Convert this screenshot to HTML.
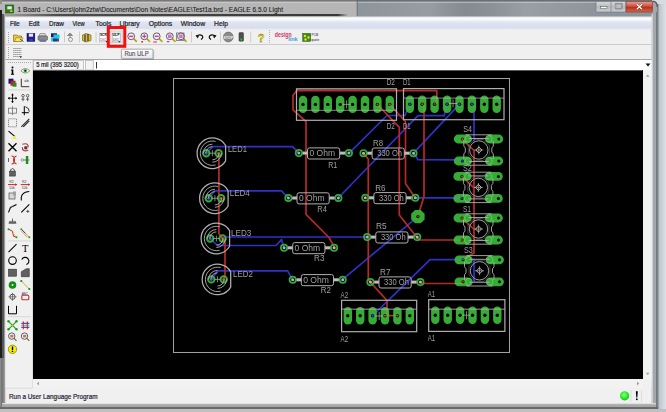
<!DOCTYPE html><html><head><meta charset="utf-8"><style>html,body{margin:0;padding:0;width:666px;height:412px;overflow:hidden;background:#a6aaae}svg{display:block}text{font-family:"Liberation Sans",sans-serif}</style></head><body>
<svg width="666" height="412" viewBox="0 0 666 412">
<defs>
<linearGradient id="tb" x1="0" y1="0" x2="0" y2="1"><stop offset="0" stop-color="#d4d6d8"/><stop offset="0.25" stop-color="#bfc2c5"/><stop offset="1" stop-color="#a9adb1"/></linearGradient>
<linearGradient id="tb2" x1="0" y1="0" x2="1" y2="0"><stop offset="0" stop-color="#000" stop-opacity="0"/><stop offset="0.5" stop-color="#000" stop-opacity="0.12"/><stop offset="1" stop-color="#000" stop-opacity="0.18"/></linearGradient>
<linearGradient id="mb" x1="0" y1="0" x2="0" y2="1"><stop offset="0" stop-color="#fdfdfe"/><stop offset="0.12" stop-color="#fafbfd"/><stop offset="0.42" stop-color="#dfe4f1"/><stop offset="0.85" stop-color="#d9deef"/><stop offset="1" stop-color="#e6e9f3"/></linearGradient>
<linearGradient id="cl" x1="0" y1="0" x2="0" y2="1"><stop offset="0" stop-color="#e8a090"/><stop offset="0.45" stop-color="#cc5440"/><stop offset="0.55" stop-color="#b8301e"/><stop offset="1" stop-color="#d4684c"/></linearGradient>
<linearGradient id="bt" x1="0" y1="0" x2="0" y2="1"><stop offset="0" stop-color="#d8dadc"/><stop offset="0.5" stop-color="#b8bcc0"/><stop offset="1" stop-color="#c8ccd0"/></linearGradient>
<linearGradient id="rf" x1="0" y1="0" x2="1" y2="0"><stop offset="0" stop-color="#50565e"/><stop offset="0.15" stop-color="#7a828c"/><stop offset="0.35" stop-color="#c0c6ce"/><stop offset="1" stop-color="#dde2e8"/></linearGradient>
</defs>
<rect x="0" y="0" width="666" height="412" fill="#a6aaae"/>
<rect x="0" y="0" width="357.5" height="17" fill="#b6b6b6"/>
<rect x="357.5" y="0" width="295" height="17" fill="#8e949c"/>
<defs><linearGradient id="streak" x1="0" y1="0" x2="1" y2="0"><stop offset="0" stop-color="#fff" stop-opacity="0"/><stop offset="0.3" stop-color="#fff" stop-opacity="0.08"/><stop offset="0.45" stop-color="#000" stop-opacity="0.06"/><stop offset="0.7" stop-color="#fff" stop-opacity="0.1"/><stop offset="1" stop-color="#fff" stop-opacity="0"/></linearGradient><linearGradient id="band" x1="0" y1="0" x2="1" y2="0"><stop offset="0" stop-color="#333" stop-opacity="0.15"/><stop offset="0.15" stop-color="#333" stop-opacity="0.8"/><stop offset="0.97" stop-color="#2a2a2a" stop-opacity="0.9"/><stop offset="1" stop-color="#2a2a2a" stop-opacity="0"/></linearGradient></defs>
<rect x="357.5" y="0" width="240" height="17" fill="url(#streak)"/>
<rect x="2" y="0" width="355.5" height="1.6" fill="#787878"/>
<rect x="357.5" y="0" width="295" height="1.6" fill="#6a7078"/>
<rect x="2" y="1.8" width="651" height="0.9" fill="#d4d4d4" opacity="0.8"/>
<rect x="0" y="0" width="2" height="4" fill="#909090"/>
<rect x="356.5" y="0" width="1.5" height="17" fill="#555" opacity="0.5"/>
<rect x="5" y="14" width="343" height="2.6" fill="url(#band)"/>
<rect x="2" y="16.2" width="655" height="1.4" fill="#c8c8c8"/>
<rect x="0" y="10" width="2" height="402" fill="#1e1e1e"/><rect x="0" y="358" width="2" height="54" fill="#8a8a8a"/>
<rect x="2" y="14" width="2" height="395" fill="#565656"/><rect x="1" y="358" width="2.5" height="50" fill="#787878"/><rect x="3.5" y="358" width="1.5" height="49" fill="#a4a4a4"/>
<rect x="4" y="15" width="1.2" height="392" fill="#9a9a9a"/>
<rect x="5.2" y="16" width="0.8" height="390" fill="#c6c6c6"/>
<rect x="656" y="4" width="10" height="408" fill="url(#rf)"/><rect x="652" y="0" width="14" height="4" fill="#d8dce2"/>
<rect x="651.5" y="14" width="1.5" height="393" fill="#d0d0d0"/>
<rect x="653" y="12" width="3.3" height="397" fill="#a4a8ac"/>
<path d="M652 1.6H652.5Q657 1.6 657 7V12H652Z" fill="#a4a8ac"/><path d="M652.5 1.2Q657.3 1.2 657.3 7" fill="none" stroke="#565c64" stroke-width="1.4"/>
<rect x="2" y="403" width="654" height="1.5" fill="#d8d8d8"/>
<rect x="2" y="404.5" width="654" height="2.5" fill="#a8a8a8"/>
<rect x="0" y="407" width="658" height="2" fill="#6a6a6a"/>
<rect x="0" y="409" width="666" height="3" fill="#c0c0c0"/>
<rect x="5.6" y="5" width="8" height="8" fill="#1c8a1c" stroke="#0c4a0c" stroke-width="0.6"/>
<rect x="7.3" y="6.3" width="4.5" height="3" fill="#e8e8e8"/>
<rect x="7" y="10.3" width="2" height="1.6" fill="#d02020"/><rect x="10.3" y="10.3" width="2" height="1.6" fill="#ffd020"/>
<text x="17.6" y="11.9" font-size="7.7" fill="#1a1a1a" stroke="#1a1a1a" stroke-width="0.1" textLength="265.4" lengthAdjust="spacingAndGlyphs">1 Board - C:\Users\john2ztw\Documents\Don Notes\EAGLE\Test1a.brd - EAGLE 6.5.0 Light</text>
<path d="M596 1.5H626V10.5Q626 12 624.5 12H597.5Q596 12 596 10.5Z" fill="url(#bt)" stroke="#707478" stroke-width="0.6"/>
<line x1="611" y1="1.5" x2="611" y2="12" stroke="#707478" stroke-width="0.6"/>
<rect x="600.5" y="6.6" width="6.5" height="2" fill="#f8f8f8" stroke="#505050" stroke-width="0.5"/>
<rect x="615.5" y="3.7" width="6.5" height="5" rx="0.8" fill="none" stroke="#505050" stroke-width="1.2"/><rect x="615.5" y="3.7" width="6.5" height="5" rx="0.8" fill="none" stroke="#f8f8f8" stroke-width="0.5"/>
<path d="M626 1.5H652.5V10.5Q652.5 12 651 12H626Z" fill="url(#cl)" stroke="#803020" stroke-width="0.6"/>
<path d="M636.8 4.3L642 9.3M642 4.3L636.8 9.3" stroke="#5a1a10" stroke-width="2.3" opacity="0.7"/><path d="M636.8 4.3L642 9.3M642 4.3L636.8 9.3" stroke="#ffffff" stroke-width="1.4"/>
<rect x="5.5" y="17.6" width="646" height="385.7" fill="#f0f0f0"/>
<rect x="5.5" y="17.6" width="646" height="11.9" fill="url(#mb)"/>
<line x1="5.5" y1="18" x2="651.5" y2="18" stroke="#ffffff" stroke-width="0.8"/>
<text x="9.9" y="25.7" font-size="7.3" fill="#1e1e1e" stroke="#1e1e1e" stroke-width="0.22" textLength="9.9" lengthAdjust="spacingAndGlyphs">File</text>
<text x="28.8" y="25.7" font-size="7.3" fill="#1e1e1e" stroke="#1e1e1e" stroke-width="0.22" textLength="10.8" lengthAdjust="spacingAndGlyphs">Edit</text>
<text x="49" y="25.7" font-size="7.3" fill="#1e1e1e" stroke="#1e1e1e" stroke-width="0.22" textLength="15" lengthAdjust="spacingAndGlyphs">Draw</text>
<text x="72.4" y="25.7" font-size="7.3" fill="#1e1e1e" stroke="#1e1e1e" stroke-width="0.22" textLength="12.3" lengthAdjust="spacingAndGlyphs">View</text>
<text x="95.5" y="25.7" font-size="7.3" fill="#1e1e1e" stroke="#1e1e1e" stroke-width="0.22" textLength="16" lengthAdjust="spacingAndGlyphs">Tools</text>
<text x="119.4" y="25.7" font-size="7.3" fill="#1e1e1e" stroke="#1e1e1e" stroke-width="0.22" textLength="20.3" lengthAdjust="spacingAndGlyphs">Library</text>
<text x="148.7" y="25.7" font-size="7.3" fill="#1e1e1e" stroke="#1e1e1e" stroke-width="0.22" textLength="23.5" lengthAdjust="spacingAndGlyphs">Options</text>
<text x="180.8" y="25.7" font-size="7.3" fill="#1e1e1e" stroke="#1e1e1e" stroke-width="0.22" textLength="24.3" lengthAdjust="spacingAndGlyphs">Window</text>
<text x="214.1" y="25.7" font-size="7.3" fill="#1e1e1e" stroke="#1e1e1e" stroke-width="0.22" textLength="13.9" lengthAdjust="spacingAndGlyphs">Help</text>
<line x1="5.5" y1="44.5" x2="651.5" y2="44.5" stroke="#c8c8c8" stroke-width="0.9"/>
<line x1="5.5" y1="59.5" x2="651.5" y2="59.5" stroke="#a0a0a0" stroke-width="0.9"/>
<rect x="8" y="32" width="1" height="1" fill="#a0a0a0"/>
<rect x="8" y="34" width="1" height="1" fill="#a0a0a0"/>
<rect x="8" y="36" width="1" height="1" fill="#a0a0a0"/>
<rect x="8" y="38" width="1" height="1" fill="#a0a0a0"/>
<rect x="8" y="40" width="1" height="1" fill="#a0a0a0"/>
<rect x="8" y="42" width="1" height="1" fill="#a0a0a0"/>
<rect x="8" y="47" width="1" height="1" fill="#a0a0a0"/>
<rect x="8" y="49" width="1" height="1" fill="#a0a0a0"/>
<rect x="8" y="51" width="1" height="1" fill="#a0a0a0"/>
<rect x="8" y="53" width="1" height="1" fill="#a0a0a0"/>
<rect x="8" y="55" width="1" height="1" fill="#a0a0a0"/>
<rect x="8" y="57" width="1" height="1" fill="#a0a0a0"/>
<rect x="33" y="60" width="618.5" height="10" fill="#ffffff"/>
<rect x="33.5" y="60.5" width="50" height="9.5" fill="#f4f4f4" stroke="#b8b8b8" stroke-width="0.8"/>
<text x="36.2" y="67" font-size="6.9" fill="#202020" stroke="#202020" stroke-width="0.2" textLength="42.6" lengthAdjust="spacingAndGlyphs">5 mil (395 3200)</text>
<rect x="85.5" y="60.5" width="7.8" height="9.5" fill="#f4f4f4" stroke="#b8b8b8" stroke-width="0.8"/>
<line x1="96.5" y1="62" x2="96.5" y2="68.5" stroke="#000" stroke-width="0.8"/>
<path d="M645.5 63.5H650.5L648 66.5Z" fill="#101010"/>
<rect x="5.5" y="60" width="27" height="328" fill="#f0f0f0"/>
<line x1="32.6" y1="60" x2="32.6" y2="388" stroke="#d8d8d8" stroke-width="0.8"/>
<line x1="5.5" y1="388.2" x2="32.6" y2="388.2" stroke="#d8d8d8" stroke-width="0.8"/>
<rect x="8" y="62" width="1" height="1" fill="#a8a8a8"/>
<rect x="10" y="62" width="1" height="1" fill="#a8a8a8"/>
<rect x="12" y="62" width="1" height="1" fill="#a8a8a8"/>
<rect x="14" y="62" width="1" height="1" fill="#a8a8a8"/>
<rect x="16" y="62" width="1" height="1" fill="#a8a8a8"/>
<rect x="18" y="62" width="1" height="1" fill="#a8a8a8"/>
<rect x="20" y="62" width="1" height="1" fill="#a8a8a8"/>
<rect x="22" y="62" width="1" height="1" fill="#a8a8a8"/>
<rect x="24" y="62" width="1" height="1" fill="#a8a8a8"/>
<rect x="26" y="62" width="1" height="1" fill="#a8a8a8"/>
<rect x="28" y="62" width="1" height="1" fill="#a8a8a8"/>
<rect x="30" y="62" width="1" height="1" fill="#a8a8a8"/>
<line x1="8" y1="89.9" x2="31" y2="89.9" stroke="#d0d0d0" stroke-width="0.8"/>
<line x1="8" y1="240.9" x2="31" y2="240.9" stroke="#d0d0d0" stroke-width="0.8"/>
<line x1="8" y1="316.7" x2="31" y2="316.7" stroke="#d0d0d0" stroke-width="0.8"/>
<rect x="33" y="70" width="610" height="309" fill="#000"/>
<line x1="33" y1="70.5" x2="642.5" y2="70.5" stroke="#707070" stroke-width="0.8"/>
<rect x="643" y="70" width="8.8" height="309" fill="#f2f2f2"/>
<rect x="33" y="379" width="610" height="9" fill="#f2f2f2"/>
<rect x="642.5" y="379" width="9" height="9" fill="#f0f0f0"/>
<path d="M645.8 76.8H649.6L647.7 74.6Z" fill="#a0a0a0"/>
<path d="M645.8 372.8H649.6L647.7 375Z" fill="#a0a0a0"/>
<path d="M39 381.5V385.5L36.8 383.5Z" fill="#a0a0a0"/>
<path d="M637 381.5V385.5L639.2 383.5Z" fill="#a0a0a0"/>
<text x="9" y="398.6" font-size="7.4" fill="#202030" stroke="#202030" stroke-width="0.2" textLength="88.5" lengthAdjust="spacingAndGlyphs">Run a User Language Program</text>
<defs><radialGradient id="gc" cx="0.45" cy="0.4" r="0.65"><stop offset="0" stop-color="#90ff90"/><stop offset="0.55" stop-color="#28f028"/><stop offset="1" stop-color="#10b810"/></radialGradient></defs>
<circle cx="624.6" cy="395.8" r="4.6" fill="url(#gc)"/>
<line x1="631" y1="390" x2="631" y2="402" stroke="#d8d8d8" stroke-width="0.8"/>
<path d="M635.8 391.2H637.8L637.3 397.5H636.3Z" fill="#000"/><rect x="636" y="398.5" width="1.6" height="1.6" fill="#000"/>
<line x1="641.5" y1="390" x2="641.5" y2="402" stroke="#d8d8d8" stroke-width="0.8"/>
<path d="M13.5 35H17L18 36H21.5V41.5H13.5Z" fill="#e8c838" stroke="#806010" stroke-width="0.6"/>
<path d="M14.5 41.5L16 37.8H23L21.5 41.5Z" fill="#f8e870" stroke="#806010" stroke-width="0.5"/>
<path d="M20 39L23.5 41.5" stroke="#202060" stroke-width="0.8"/>
<rect x="27" y="33.5" width="7.8" height="7.8" fill="#1a1a9a" stroke="#000040" stroke-width="0.5"/>
<rect x="28.8" y="33.7" width="4.3" height="3" fill="#e8e8f0"/><rect x="29.2" y="38.6" width="3.6" height="2.6" fill="#404080"/>
<path d="M40 33.5H45L46 36H39Z" fill="#d8d8d8" stroke="#606060" stroke-width="0.5"/>
<rect x="38" y="36" width="9.5" height="4.3" rx="1" fill="#8a8a8a" stroke="#404040" stroke-width="0.5"/>
<rect x="39.5" y="40.3" width="6.5" height="1.5" fill="#6060a0"/>
<rect x="51" y="33.3" width="6" height="4" fill="#1a1a70"/><rect x="53.5" y="34.5" width="6" height="4" fill="#20c8d8"/>
<rect x="51" y="37.8" width="6" height="3.6" fill="#20c8d8"/><rect x="53" y="38.5" width="6" height="3" fill="#1a1a70" opacity="0.8"/>
<line x1="64.5" y1="31.5" x2="64.5" y2="42.5" stroke="#c4c4c4" stroke-width="0.8"/>
<path d="M70 33L72.5 35.5H67.5Z M70 35.5V38" fill="#909090" stroke="#707070" stroke-width="0.7"/>
<circle cx="70.5" cy="39.5" r="2" fill="none" stroke="#808080" stroke-width="0.8"/>
<line x1="79.5" y1="31.5" x2="79.5" y2="42.5" stroke="#c4c4c4" stroke-width="0.8"/>
<path d="M82.5 35L86 33.5L91 35V40.5L86 42L82.5 40.5Z" fill="#e0c020" stroke="#605010" stroke-width="0.6"/>
<path d="M85 34.5V41.5M88 34V41" stroke="#202070" stroke-width="1.1"/>
<line x1="96" y1="31.5" x2="96" y2="42.5" stroke="#c4c4c4" stroke-width="0.8"/>
<rect x="99.5" y="33.3" width="8" height="8.6" fill="#ffffff" stroke="#9a9a9a" stroke-width="0.5"/>
<text x="99.9" y="36.4" font-size="3.4" fill="#101010" font-weight="bold" textLength="7" lengthAdjust="spacingAndGlyphs">SCR</text>
<text x="100.2" y="40.6" font-size="3.4" fill="#505050" textLength="6.2" lengthAdjust="spacingAndGlyphs">DIC</text><path d="M105.5 41.3L107.5 41.3L106.5 42.6Z" fill="#000"/>
<rect x="110.3" y="31" width="12" height="11.8" fill="#e4e4e4" stroke="#c0c0c0" stroke-width="0.5"/>
<rect x="112.2" y="33.3" width="8" height="8.6" fill="#f8f8f8" stroke="#9a9a9a" stroke-width="0.5"/>
<text x="112.6" y="36.4" font-size="3.4" fill="#101010" font-weight="bold" textLength="7" lengthAdjust="spacingAndGlyphs">ULP</text>
<text x="112.9" y="40.6" font-size="3.4" fill="#505050" textLength="6.2" lengthAdjust="spacingAndGlyphs">DIC</text><path d="M118.3 41.3L120.3 41.3L119.3 42.6Z" fill="#000"/>
<rect x="108.3" y="27.5" width="16.5" height="18.8" fill="none" stroke="#ee1111" stroke-width="3"/>
<line x1="133.60000000000002" y1="38.6" x2="136.8" y2="41.8" stroke="#c8c020" stroke-width="2"/>
<line x1="133.60000000000002" y1="38.6" x2="136.8" y2="41.8" stroke="#707010" stroke-width="0.5"/>
<circle cx="131.20000000000002" cy="36.3" r="3.4" fill="#f8eef8" stroke="#606060" stroke-width="1"/>
<rect x="129.20000000000002" y="35.6" width="4" height="1.6" fill="#c040c0"/>
<line x1="146.70000000000002" y1="38.6" x2="149.9" y2="41.8" stroke="#c8c020" stroke-width="2"/>
<line x1="146.70000000000002" y1="38.6" x2="149.9" y2="41.8" stroke="#707010" stroke-width="0.5"/>
<circle cx="144.3" cy="36.3" r="3.4" fill="#f8eef8" stroke="#606060" stroke-width="1"/>
<path d="M142.3 36.3H146.3M144.3 34.3V38.3" stroke="#c040c0" stroke-width="1.3"/><rect x="141.4" y="41" width="1.6" height="1.6" fill="#e02020"/>
<line x1="159.10000000000002" y1="38.6" x2="162.3" y2="41.8" stroke="#c8c020" stroke-width="2"/>
<line x1="159.10000000000002" y1="38.6" x2="162.3" y2="41.8" stroke="#707010" stroke-width="0.5"/>
<circle cx="156.70000000000002" cy="36.3" r="3.4" fill="#f8eef8" stroke="#606060" stroke-width="1"/>
<rect x="154.70000000000002" y="35.6" width="4" height="1.4" fill="#c040c0"/><rect x="153.3" y="41.5" width="3.5" height="1" fill="#e02020"/>
<line x1="172.20000000000002" y1="38.6" x2="175.4" y2="41.8" stroke="#c8c020" stroke-width="2"/>
<line x1="172.20000000000002" y1="38.6" x2="175.4" y2="41.8" stroke="#707010" stroke-width="0.5"/>
<circle cx="169.8" cy="36.3" r="3.4" fill="#f8eef8" stroke="#606060" stroke-width="1"/>
<rect x="168.0" y="34.5" width="3.6" height="3.6" fill="#d070d0"/><rect x="166.9" y="41.2" width="2.5" height="1" fill="#a020a0"/>
<line x1="183.3" y1="38.6" x2="186.5" y2="41.8" stroke="#c8c020" stroke-width="2"/>
<line x1="183.3" y1="38.6" x2="186.5" y2="41.8" stroke="#707010" stroke-width="0.5"/>
<circle cx="180.9" cy="36.3" r="3.4" fill="#f8eef8" stroke="#606060" stroke-width="1"/>
<rect x="176.5" y="33" width="7.5" height="7.5" fill="none" stroke="#606060" stroke-width="0.7"/><rect x="179.1" y="34.5" width="3.6" height="3.6" fill="#d070d0"/>
<line x1="191.5" y1="31.5" x2="191.5" y2="42.5" stroke="#c4c4c4" stroke-width="0.8"/>
<path d="M196.5 36.5Q199.5 33.5 202.5 36Q203.5 38 201 39.5" fill="none" stroke="#101010" stroke-width="1.1"/><path d="M195.5 35L197.8 38.5L199 35.5Z" fill="#101010"/>
<path d="M215.5 36.5Q212.5 33.5 209.5 36Q208.5 38 211 39.5" fill="none" stroke="#101010" stroke-width="1.1"/><path d="M216.5 35L214.2 38.5L213 35.5Z" fill="#101010"/>
<line x1="220.5" y1="31.5" x2="220.5" y2="42.5" stroke="#c4c4c4" stroke-width="0.8"/>
<circle cx="228.3" cy="37" r="4.9" fill="#8a8a8a" stroke="#5a5a5a" stroke-width="0.6"/>
<text x="228.3" y="38.5" font-size="3.8" fill="#f0f0f0" text-anchor="middle" font-weight="bold">STOP</text>
<rect x="239" y="32.6" width="4.5" height="8.6" rx="0.8" fill="#505050" stroke="#303030" stroke-width="0.5"/>
<circle cx="241.2" cy="39.6" r="1.1" fill="#20c020"/>
<line x1="250.7" y1="31.5" x2="250.7" y2="42.5" stroke="#c4c4c4" stroke-width="0.8"/>
<text x="261" y="41.5" font-size="11" font-weight="bold" fill="#fff000" stroke="#303000" stroke-width="0.3" text-anchor="middle">?</text>
<rect x="269" y="30" width="1" height="1" fill="#b0b0b0"/>
<rect x="269" y="32" width="1" height="1" fill="#b0b0b0"/>
<rect x="269" y="34" width="1" height="1" fill="#b0b0b0"/>
<rect x="269" y="36" width="1" height="1" fill="#b0b0b0"/>
<rect x="269" y="38" width="1" height="1" fill="#b0b0b0"/>
<rect x="269" y="40" width="1" height="1" fill="#b0b0b0"/>
<rect x="269" y="42" width="1" height="1" fill="#b0b0b0"/>
<text x="274.8" y="37.3" font-size="6.5" font-weight="bold" fill="#d03868" textLength="17" lengthAdjust="spacingAndGlyphs">design</text>
<text x="288.2" y="41.4" font-size="5.8" font-weight="bold" fill="#40a0d8" textLength="9.5" lengthAdjust="spacingAndGlyphs">link</text>
<rect x="302.7" y="33.4" width="8" height="8" fill="#3a8a20" stroke="#205010" stroke-width="0.5"/>
<circle cx="305" cy="36" r="1.2" fill="#e8e020"/><circle cx="308.5" cy="37.5" r="1.2" fill="#e8e020"/><circle cx="305.5" cy="39.5" r="1.2" fill="#e8e020"/>
<text x="311.5" y="36.3" font-size="3.2" fill="#202020">PCB</text><text x="311.2" y="40.5" font-size="3.2" fill="#202020">quote</text>
<g stroke="#909090" stroke-width="0.6"><line x1="13" y1="48.5" x2="21" y2="48.5"/><line x1="13" y1="50.5" x2="21" y2="50.5"/><line x1="13" y1="52.5" x2="21" y2="52.5"/><line x1="13" y1="54.5" x2="21" y2="54.5"/><line x1="13" y1="56.5" x2="21" y2="56.5"/><line x1="13.5" y1="48" x2="13.5" y2="57" stroke-dasharray="1 1"/><line x1="15.5" y1="48" x2="15.5" y2="57" stroke-dasharray="1 1"/><line x1="17.5" y1="48" x2="17.5" y2="57" stroke-dasharray="1 1"/><line x1="19.5" y1="48" x2="19.5" y2="57" stroke-dasharray="1 1"/><line x1="21" y1="48" x2="21" y2="57" stroke-dasharray="1 1"/></g>
<path d="M19.5 56.5H22L20.8 58Z" fill="#000"/>
<rect x="122.3" y="50.2" width="32" height="9.8" rx="1" fill="#000" opacity="0.12"/>
<defs><linearGradient id="tt" x1="0" y1="0" x2="0" y2="1"><stop offset="0" stop-color="#ffffff"/><stop offset="1" stop-color="#e4e5f0"/></linearGradient></defs>
<rect x="121.4" y="49.2" width="31.6" height="9.6" rx="1" fill="url(#tt)" stroke="#767676" stroke-width="0.6"/>
<text x="124.4" y="56.3" font-size="7.3" fill="#4c4c4c" stroke="#4c4c4c" stroke-width="0.12" textLength="24.3" lengthAdjust="spacingAndGlyphs">Run ULP</text>
<circle cx="12.5" cy="67.6" r="1" fill="#000"/><path d="M11.0 69.6H13.3V73.8H14.1V74.8H10.9V73.8H11.7V70.6H11.0Z" fill="#000"/>
<path d="M20.8 70.8Q25.3 66.3 29.8 70.8Q25.3 75.3 20.8 70.8Z" fill="#fffff0" stroke="#a08820" stroke-width="0.9"/><circle cx="25.3" cy="70.8" r="1.8" fill="#20a0c0"/><circle cx="25.3" cy="70.8" r="0.7" fill="#000"/>
<rect x="8.5" y="78.7" width="5" height="5" fill="#101080"/><rect x="10.5" y="80.7" width="5" height="5" fill="#c02020"/><rect x="12.5" y="82.7" width="4" height="4" fill="#209020"/>
<path d="M21.3 78.7V86.7H29.3" fill="none" stroke="#202020" stroke-width="0.9"/><text x="24.3" y="82.2" font-size="4" fill="#303030">ab</text>
<path d="M8.0 98.2H17.0M12.5 93.7V102.7" stroke="#000" stroke-width="0.9"/><path d="M8.0 98.2l1.5 -1.5v3z M17.0 98.2l-1.5 -1.5v3z M12.5 93.7l-1.5 1.5h3z M12.5 102.7l-1.5 -1.5h3z" fill="#000"/>
<g fill="none" stroke="#404040" stroke-width="0.8"><circle cx="23.0" cy="95.7" r="1.3"/><circle cx="27.6" cy="95.7" r="1.3"/><path d="M23.0 97.2V101.2M27.6 97.2V101.2M21.5 99.2H24.5M26.1 99.2H29.1"/></g>
<g fill="none" stroke="#707070" stroke-width="0.8"><rect x="8.5" y="108.2" width="8" height="5"/><line x1="12.5" y1="106.2" x2="12.5" y2="115.2"/></g>
<path d="M24.3 106.2V115.2M21.8 112.7H28.8" stroke="#000" stroke-width="1"/><path d="M25.3 106.7Q29.3 107.7 29.3 111.7" fill="none" stroke="#000" stroke-width="0.8"/>
<rect x="8.5" y="118.8" width="8" height="8" fill="none" stroke="#505050" stroke-width="0.8" stroke-dasharray="1 1"/>
<path d="M21.3 126.8L29.3 118.8M23.3 126.8L29.3 120.8" stroke="#303030" stroke-width="1.2"/>
<path d="M8.5 131.2L14.5 136.2" stroke="#000" stroke-width="1.1"/><path d="M11.5 138.2L15.5 135.7L16.5 139.2Z" fill="#f0f020"/>
<path d="M8.5 143.3L16.5 151.3M16.5 143.3L8.5 151.3" stroke="#000" stroke-width="1.3"/>
<path d="M22.3 144.3Q28.3 142.3 28.3 147.3M28.3 150.3Q22.3 152.3 22.3 147.3" fill="none" stroke="#c03030" stroke-width="1.2"/><rect x="24.3" y="146.3" width="3" height="3" fill="#404040"/>
<path d="M11.5 156Q14.5 156 14.5 160Q14.5 164 11.5 164M16.5 156Q13.5 157 13.5 160Q13.5 163 16.5 164" fill="none" stroke="#c03030" stroke-width="1.1"/><path d="M8.5 158V162" stroke="#404040" stroke-width="0.8"/>
<path d="M21.3 160H29.3" stroke="#404040" stroke-width="0.8"/><circle cx="22.3" cy="160" r="1.2" fill="#ffffff" stroke="#404040" stroke-width="0.5"/><rect x="25.8" y="156" width="2.5" height="8" fill="#209020"/>
<rect x="9.5" y="171.1" width="6" height="5" fill="#606060" stroke="#303030" stroke-width="0.5"/><path d="M10.7 171.1V169.6Q12.5 167.6 14.3 169.6V171.1" fill="none" stroke="#303030" stroke-width="0.8"/>
<text x="9.2" y="183.1" font-size="3.6" fill="#404040">R2</text><path d="M8.0 184.6H17.0" stroke="#d02020" stroke-width="1"/><path d="M17.0 184.6l-1.8 -1.3v2.6z" fill="#d02020"/><text x="9.0" y="188.6" font-size="3.6" fill="#404040">10k</text>
<text x="22.0" y="183.1" font-size="3.6" fill="#404040">R2</text><path d="M20.8 184.6H29.8" stroke="#d02020" stroke-width="1"/><path d="M29.8 184.6l-1.8 -1.3v2.6z" fill="#d02020"/><text x="21.8" y="188.6" font-size="3.6" fill="#404040">10k</text>
<rect x="9.0" y="193" width="6" height="6" fill="#d8d8d8" stroke="#505050" stroke-width="0.7"/><rect x="13.0" y="191.5" width="3" height="4" fill="#a0a0a0"/>
<path d="M21.3 200.5V197Q22.3 192 29.3 191.5" fill="none" stroke="#000" stroke-width="1.1"/>
<path d="M8.5 212.4L10.5 207.4L16.5 204.4" fill="none" stroke="#000" stroke-width="1.1"/><path d="M10.5 207.4L13.5 205.9" stroke="#808080" stroke-width="0.6"/>
<path d="M21.3 212.4L29.3 204.4" stroke="#000" stroke-width="1.1"/><path d="M26.3 211.4H29.3M27.8 209.9V212.9" stroke="#000" stroke-width="0.6"/>
<path d="M8.5 223.8H16.5L15.5 220.8L13.5 221.8L12.5 217.8L11.5 221.8L9.5 220.8Z" fill="#606060"/>
<path d="M8.5 229.2L12.5 231.2L13.5 236.2L16.5 237.2" fill="none" stroke="#d02020" stroke-width="1"/><path d="M13.0 233.2L16.5 237.2" stroke="#e0c020" stroke-width="0.9"/><circle cx="8.5" cy="229.2" r="1" fill="#20a020"/><circle cx="16.5" cy="237.2" r="1" fill="#20a020"/>
<path d="M21.3 229.2L29.3 237.2M21.3 231.2L27.3 237.2" fill="none" stroke="#d0a020" stroke-width="0.9"/><path d="M21.3 229.2L25.3 233.2" stroke="#2020c0" stroke-width="0.9"/><circle cx="21.3" cy="229.2" r="1" fill="#20a020"/><circle cx="29.3" cy="237.2" r="1" fill="#20a020"/>
<path d="M8.5 252.2L16.5 244.2" stroke="#000" stroke-width="1.1"/>
<text x="25.3" y="252.2" font-size="10.5" fill="#000" text-anchor="middle" style="font-family:'Liberation Serif',serif">T</text>
<circle cx="12.5" cy="260.6" r="3.8" fill="none" stroke="#000" stroke-width="1.1"/>
<path d="M21.8 259.6A3.7 3.7 0 1 1 26.3 264.6" fill="none" stroke="#000" stroke-width="1.1"/>
<rect x="8.5" y="269.2" width="8" height="7" fill="#606060" stroke="#303030" stroke-width="0.6"/>
<path d="M21.3 276.7V271.7L26.3 268.7H29.3V276.7Z" fill="#606060" stroke="#303030" stroke-width="0.6"/>
<circle cx="12.5" cy="285" r="3.8" fill="#109010"/><circle cx="12.5" cy="285" r="1" fill="#f0f0f0"/>
<path d="M21.3 281L29.3 289" stroke="#c8b020" stroke-width="1"/><circle cx="21.3" cy="281" r="1.1" fill="#109010"/><circle cx="29.3" cy="289" r="1.1" fill="#109010"/>
<circle cx="12.5" cy="296.8" r="2.6" fill="none" stroke="#404040" stroke-width="0.9"/><path d="M8.5 296.8H16.5M12.5 292.8V300.8" stroke="#404040" stroke-width="0.6"/>
<rect x="21.8" y="295.3" width="7" height="4.5" rx="1" fill="none" stroke="#c03030" stroke-width="1.1"/><text x="21.8" y="294.8" font-size="3" fill="#303030">ABC</text>
<path d="M8.5 305.8V313.8H16.5V305.8" fill="none" stroke="#000" stroke-width="1"/>
<path d="M8.5 321.3L16.5 329.3M16.5 321.3L8.5 329.3" stroke="#20a020" stroke-width="1.1"/><path d="M11.5 325.3L13.5 325.3" stroke="#e0c020" stroke-width="1"/><circle cx="8.5" cy="321.3" r="1.2" fill="#10a010"/><circle cx="16.5" cy="321.3" r="1.2" fill="#10a010"/><circle cx="8.5" cy="329.3" r="1.2" fill="#10a010"/><circle cx="16.5" cy="329.3" r="1.2" fill="#10a010"/>
<path d="M21.3 323.3H29.3M21.3 327.3H29.3" stroke="#2020d0" stroke-width="1"/><path d="M23.3 321.3V329.3M27.3 321.3V329.3" stroke="#d02020" stroke-width="1"/><path d="M21.3 325.3H29.3" stroke="#20a020" stroke-width="0.7"/>
<circle cx="11.7" cy="336.09999999999997" r="3.2" fill="#f0f0f0" stroke="#505050" stroke-width="0.9"/><path d="M13.8 338.2L16.5 340.9" stroke="#707020" stroke-width="1.2"/><rect x="10.3" y="334.9" width="3" height="2.5" fill="#c03030" opacity="0.7"/>
<circle cx="24.5" cy="336.09999999999997" r="3.2" fill="#f0f0f0" stroke="#505050" stroke-width="0.9"/><path d="M26.6 338.2L29.3 340.9" stroke="#707020" stroke-width="1.2"/><rect x="23.1" y="334.9" width="3" height="2.5" fill="#c03030" opacity="0.7"/>
<circle cx="12.5" cy="349.3" r="4.2" fill="#f4f000" stroke="#606000" stroke-width="0.6"/><rect x="11.8" y="346.5" width="1.4" height="3.5" fill="#000"/><rect x="11.8" y="350.7" width="1.4" height="1.3" fill="#000"/>
<svg x="33" y="70.8" width="610" height="308.2" viewBox="33 70.8 610 308.2" overflow="hidden">
<defs><filter id="nolcd" x="0" y="0" width="1" height="1"><feOffset dx="0" dy="0"/></filter></defs><g font-family="Liberation Sans, sans-serif" filter="url(#nolcd)">
<rect x="173.5" y="78.5" width="336" height="274" fill="none" stroke="#a0a0a0" stroke-width="1.05"/>
<polyline points="206.3,153.2 212.8,146.6 292.6,146.6 298.9,153.1" fill="none" stroke="#3030c8" stroke-width="1.7" stroke-linejoin="round" stroke-linecap="round"/>
<polyline points="208.5,198.3 214.7,190.8 281.4,190.8 288.4,198.0" fill="none" stroke="#3030c8" stroke-width="1.7" stroke-linejoin="round" stroke-linecap="round"/>
<polyline points="210.0,238.5 217.5,245.5 276.0,245.5 281.5,239.5 284.1,247.8" fill="none" stroke="#3030c8" stroke-width="1.7" stroke-linejoin="round" stroke-linecap="round"/>
<polyline points="211.5,279.4 217.5,270.9 287.6,270.9 292.7,279.8" fill="none" stroke="#3030c8" stroke-width="1.7" stroke-linejoin="round" stroke-linecap="round"/>
<polyline points="222.8,238.5 226.0,237.0 367.2,237.0" fill="none" stroke="#3030c8" stroke-width="1.7" stroke-linejoin="round" stroke-linecap="round"/>
<polyline points="349.1,153.1 387.0,115.5 405.0,115.5 409.8,104.2" fill="none" stroke="#3030c8" stroke-width="1.7" stroke-linejoin="round" stroke-linecap="round"/>
<polyline points="338.2,198.0 418.0,115.6 444.2,115.6 447.1,104.2" fill="none" stroke="#3030c8" stroke-width="1.7" stroke-linejoin="round" stroke-linecap="round"/>
<polyline points="459.5,104.2 413.7,152.8" fill="none" stroke="#3030c8" stroke-width="1.7" stroke-linejoin="round" stroke-linecap="round"/>
<polyline points="413.7,152.8 418.0,159.7 462.3,159.9" fill="none" stroke="#3030c8" stroke-width="1.7" stroke-linejoin="round" stroke-linecap="round"/>
<polyline points="415.1,197.8 462.0,197.8" fill="none" stroke="#3030c8" stroke-width="1.7" stroke-linejoin="round" stroke-linecap="round"/>
<polyline points="417.9,216.6 342.1,279.8" fill="none" stroke="#3030c8" stroke-width="1.7" stroke-linejoin="round" stroke-linecap="round"/>
<polyline points="462.6,259.6 430.1,259.7 372.6,315.7" fill="none" stroke="#3030c8" stroke-width="1.7" stroke-linejoin="round" stroke-linecap="round"/>
<polyline points="471.9,104.2 474.0,106.5 474.0,141.0" fill="none" stroke="#3030c8" stroke-width="1.7" stroke-linejoin="round" stroke-linecap="round"/>
<polyline points="474.0,259.0 474.0,282.0" fill="none" stroke="#3030c8" stroke-width="1.7" stroke-linejoin="round" stroke-linecap="round"/>
<polyline points="436.8,103.8 436.8,90.6 296.7,90.4 293.0,95.4 293.0,109.8 306.0,121.5 306.0,214.4 329.0,237.5 334.8,247.8" fill="none" stroke="#b82a2a" stroke-width="1.7" stroke-linejoin="round" stroke-linecap="round"/>
<polyline points="377.4,104.4 399.3,127.4 399.3,215.0 416.6,237.1" fill="none" stroke="#b82a2a" stroke-width="1.7" stroke-linejoin="round" stroke-linecap="round"/>
<polyline points="389.8,104.4 405.5,121.8 405.5,183.5 415.1,197.8" fill="none" stroke="#b82a2a" stroke-width="1.7" stroke-linejoin="round" stroke-linecap="round"/>
<polyline points="422.2,104.2 424.0,106.0 424.0,196.3 417.9,216.6" fill="none" stroke="#b82a2a" stroke-width="1.7" stroke-linejoin="round" stroke-linecap="round"/>
<polyline points="363.5,153.2 368.3,159.0 368.3,279.5 370.4,282.1" fill="none" stroke="#b82a2a" stroke-width="1.7" stroke-linejoin="round" stroke-linecap="round"/>
<polyline points="370.4,282.1 387.0,300.5 387.0,315.6" fill="none" stroke="#b82a2a" stroke-width="1.7" stroke-linejoin="round" stroke-linecap="round"/>
<polyline points="384.8,315.7 397.4,315.7" fill="none" stroke="#b82a2a" stroke-width="1.7" stroke-linejoin="round" stroke-linecap="round"/>
<polyline points="416.6,237.1 419.5,240.0 462.3,240.0" fill="none" stroke="#b82a2a" stroke-width="1.7" stroke-linejoin="round" stroke-linecap="round"/>
<polyline points="420.5,282.1 422.0,283.5 462.5,283.5" fill="none" stroke="#b82a2a" stroke-width="1.7" stroke-linejoin="round" stroke-linecap="round"/>
<polyline points="218.5,153.2 218.9,156.0 218.9,233.8 222.8,238.5 225.0,242.0 225.0,275.0 223.5,279.4" fill="none" stroke="#b82a2a" stroke-width="1.7" stroke-linejoin="round" stroke-linecap="round"/>
<polyline points="474.0,150.5 474.0,253.0 462.6,259.6" fill="none" stroke="#b82a2a" stroke-width="1.7" stroke-linejoin="round" stroke-linecap="round"/>
<polyline points="462.0,139.0 474.0,150.5" fill="none" stroke="#b82a2a" stroke-width="1.7" stroke-linejoin="round" stroke-linecap="round"/>
<polyline points="462.0,176.4 474.0,188.0" fill="none" stroke="#b82a2a" stroke-width="1.7" stroke-linejoin="round" stroke-linecap="round"/>
<polyline points="462.0,218.0 474.0,229.5" fill="none" stroke="#b82a2a" stroke-width="1.7" stroke-linejoin="round" stroke-linecap="round"/>
<rect x="298.8" y="95.7" width="8.4" height="17.4" rx="4.2" fill="#36ac36"/>
<circle cx="303.0" cy="104.4" r="1.7" fill="#000"/>
<rect x="311.2" y="95.7" width="8.4" height="17.4" rx="4.2" fill="#36ac36"/>
<circle cx="315.4" cy="104.4" r="1.7" fill="#000"/>
<rect x="323.6" y="95.7" width="8.4" height="17.4" rx="4.2" fill="#36ac36"/>
<circle cx="327.8" cy="104.4" r="1.7" fill="#000"/>
<rect x="336.0" y="95.7" width="8.4" height="17.4" rx="4.2" fill="#36ac36"/>
<circle cx="340.2" cy="104.4" r="1.7" fill="#000"/>
<rect x="348.4" y="95.7" width="8.4" height="17.4" rx="4.2" fill="#36ac36"/>
<circle cx="352.6" cy="104.4" r="1.7" fill="#000"/>
<rect x="360.8" y="95.7" width="8.4" height="17.4" rx="4.2" fill="#36ac36"/>
<circle cx="365.0" cy="104.4" r="1.7" fill="#000"/>
<rect x="373.2" y="95.7" width="8.4" height="17.4" rx="4.2" fill="#36ac36"/>
<circle cx="377.4" cy="104.4" r="1.7" fill="#000"/>
<circle cx="377.4" cy="104.4" r="1.1" fill="#b82a2a"/>
<rect x="385.6" y="95.7" width="8.4" height="17.4" rx="4.2" fill="#36ac36"/>
<circle cx="389.8" cy="104.4" r="1.7" fill="#000"/>
<circle cx="389.8" cy="104.4" r="1.1" fill="#b82a2a"/>
<rect x="405.6" y="95.5" width="8.4" height="17.4" rx="4.2" fill="#36ac36"/>
<circle cx="409.8" cy="104.2" r="1.7" fill="#000"/>
<circle cx="409.8" cy="104.2" r="1.1" fill="#3030c8"/>
<rect x="418.0" y="95.5" width="8.4" height="17.4" rx="4.2" fill="#36ac36"/>
<circle cx="422.2" cy="104.2" r="1.7" fill="#000"/>
<circle cx="422.2" cy="104.2" r="1.1" fill="#b82a2a"/>
<rect x="430.4" y="95.5" width="8.4" height="17.4" rx="4.2" fill="#36ac36"/>
<circle cx="434.6" cy="104.2" r="1.7" fill="#000"/>
<circle cx="434.6" cy="104.2" r="1.1" fill="#b82a2a"/>
<rect x="442.9" y="95.5" width="8.4" height="17.4" rx="4.2" fill="#36ac36"/>
<circle cx="447.1" cy="104.2" r="1.7" fill="#000"/>
<circle cx="447.1" cy="104.2" r="1.1" fill="#3030c8"/>
<rect x="455.3" y="95.5" width="8.4" height="17.4" rx="4.2" fill="#36ac36"/>
<circle cx="459.5" cy="104.2" r="1.7" fill="#000"/>
<circle cx="459.5" cy="104.2" r="1.1" fill="#3030c8"/>
<rect x="467.7" y="95.5" width="8.4" height="17.4" rx="4.2" fill="#36ac36"/>
<circle cx="471.9" cy="104.2" r="1.7" fill="#000"/>
<circle cx="471.9" cy="104.2" r="1.1" fill="#3030c8"/>
<rect x="480.1" y="95.5" width="8.4" height="17.4" rx="4.2" fill="#36ac36"/>
<circle cx="484.3" cy="104.2" r="1.7" fill="#000"/>
<rect x="492.5" y="95.5" width="8.4" height="17.4" rx="4.2" fill="#36ac36"/>
<circle cx="496.7" cy="104.2" r="1.7" fill="#000"/>
<rect x="343.6" y="307.0" width="8.4" height="17.4" rx="4.2" fill="#36ac36"/>
<circle cx="347.8" cy="315.7" r="1.7" fill="#000"/>
<rect x="356.0" y="307.0" width="8.4" height="17.4" rx="4.2" fill="#36ac36"/>
<circle cx="360.2" cy="315.7" r="1.7" fill="#000"/>
<rect x="368.4" y="307.0" width="8.4" height="17.4" rx="4.2" fill="#36ac36"/>
<circle cx="372.6" cy="315.7" r="1.7" fill="#000"/>
<circle cx="372.6" cy="315.7" r="1.1" fill="#3030c8"/>
<rect x="380.8" y="307.0" width="8.4" height="17.4" rx="4.2" fill="#36ac36"/>
<circle cx="385.0" cy="315.7" r="1.7" fill="#000"/>
<circle cx="385.0" cy="315.7" r="1.1" fill="#b82a2a"/>
<rect x="393.2" y="307.0" width="8.4" height="17.4" rx="4.2" fill="#36ac36"/>
<circle cx="397.4" cy="315.7" r="1.7" fill="#000"/>
<circle cx="397.4" cy="315.7" r="1.1" fill="#b82a2a"/>
<rect x="405.6" y="307.0" width="8.4" height="17.4" rx="4.2" fill="#36ac36"/>
<circle cx="409.8" cy="315.7" r="1.7" fill="#000"/>
<rect x="431.1" y="306.6" width="8.4" height="17.4" rx="4.2" fill="#36ac36"/>
<circle cx="435.3" cy="315.3" r="1.7" fill="#000"/>
<rect x="443.5" y="306.6" width="8.4" height="17.4" rx="4.2" fill="#36ac36"/>
<circle cx="447.7" cy="315.3" r="1.7" fill="#000"/>
<rect x="455.9" y="306.6" width="8.4" height="17.4" rx="4.2" fill="#36ac36"/>
<circle cx="460.1" cy="315.3" r="1.7" fill="#000"/>
<rect x="468.3" y="306.6" width="8.4" height="17.4" rx="4.2" fill="#36ac36"/>
<circle cx="472.5" cy="315.3" r="1.7" fill="#000"/>
<rect x="480.7" y="306.6" width="8.4" height="17.4" rx="4.2" fill="#36ac36"/>
<circle cx="484.9" cy="315.3" r="1.7" fill="#000"/>
<rect x="493.1" y="306.6" width="8.4" height="17.4" rx="4.2" fill="#36ac36"/>
<circle cx="497.3" cy="315.3" r="1.7" fill="#000"/>
<rect x="453.8" y="134.6" width="17.6" height="8.8" rx="4.4" fill="#36ac36"/>
<circle cx="468.3" cy="139.0" r="3.4" fill="none" stroke="#7ad87a" stroke-width="0.9" opacity="0.7"/>
<circle cx="462.3" cy="139.0" r="1.5" fill="#000"/>
<rect x="453.8" y="156.6" width="17.6" height="8.8" rx="4.4" fill="#36ac36"/>
<circle cx="468.3" cy="161.0" r="3.4" fill="none" stroke="#7ad87a" stroke-width="0.9" opacity="0.7"/>
<circle cx="462.3" cy="161.0" r="1.5" fill="#000"/>
<rect x="485.6" y="134.6" width="17.6" height="8.8" rx="4.4" fill="#36ac36"/>
<circle cx="488.8" cy="139.0" r="3.4" fill="none" stroke="#7ad87a" stroke-width="0.9" opacity="0.7"/>
<circle cx="498.8" cy="139.0" r="1.5" fill="#000"/>
<rect x="485.6" y="156.6" width="17.6" height="8.8" rx="4.4" fill="#36ac36"/>
<circle cx="488.8" cy="161.0" r="3.4" fill="none" stroke="#7ad87a" stroke-width="0.9" opacity="0.7"/>
<circle cx="498.8" cy="161.0" r="1.5" fill="#000"/>
<circle cx="462.3" cy="139.0" r="1" fill="#b82a2a"/><circle cx="462.3" cy="161.0" r="1" fill="#3030c8"/>
<rect x="453.4" y="172.0" width="17.6" height="8.8" rx="4.4" fill="#36ac36"/>
<circle cx="467.9" cy="176.4" r="3.4" fill="none" stroke="#7ad87a" stroke-width="0.9" opacity="0.7"/>
<circle cx="461.9" cy="176.4" r="1.5" fill="#000"/>
<rect x="453.4" y="194.0" width="17.6" height="8.8" rx="4.4" fill="#36ac36"/>
<circle cx="467.9" cy="198.4" r="3.4" fill="none" stroke="#7ad87a" stroke-width="0.9" opacity="0.7"/>
<circle cx="461.9" cy="198.4" r="1.5" fill="#000"/>
<rect x="485.2" y="172.0" width="17.6" height="8.8" rx="4.4" fill="#36ac36"/>
<circle cx="488.4" cy="176.4" r="3.4" fill="none" stroke="#7ad87a" stroke-width="0.9" opacity="0.7"/>
<circle cx="498.4" cy="176.4" r="1.5" fill="#000"/>
<rect x="485.2" y="194.0" width="17.6" height="8.8" rx="4.4" fill="#36ac36"/>
<circle cx="488.4" cy="198.4" r="3.4" fill="none" stroke="#7ad87a" stroke-width="0.9" opacity="0.7"/>
<circle cx="498.4" cy="198.4" r="1.5" fill="#000"/>
<circle cx="461.9" cy="176.4" r="1" fill="#b82a2a"/><circle cx="461.9" cy="198.4" r="1" fill="#3030c8"/>
<rect x="453.5" y="213.6" width="17.6" height="8.8" rx="4.4" fill="#36ac36"/>
<circle cx="468.0" cy="218.0" r="3.4" fill="none" stroke="#7ad87a" stroke-width="0.9" opacity="0.7"/>
<circle cx="462.0" cy="218.0" r="1.5" fill="#000"/>
<rect x="453.5" y="235.6" width="17.6" height="8.8" rx="4.4" fill="#36ac36"/>
<circle cx="468.0" cy="240.0" r="3.4" fill="none" stroke="#7ad87a" stroke-width="0.9" opacity="0.7"/>
<circle cx="462.0" cy="240.0" r="1.5" fill="#000"/>
<rect x="485.3" y="213.6" width="17.6" height="8.8" rx="4.4" fill="#36ac36"/>
<circle cx="488.5" cy="218.0" r="3.4" fill="none" stroke="#7ad87a" stroke-width="0.9" opacity="0.7"/>
<circle cx="498.5" cy="218.0" r="1.5" fill="#000"/>
<rect x="485.3" y="235.6" width="17.6" height="8.8" rx="4.4" fill="#36ac36"/>
<circle cx="488.5" cy="240.0" r="3.4" fill="none" stroke="#7ad87a" stroke-width="0.9" opacity="0.7"/>
<circle cx="498.5" cy="240.0" r="1.5" fill="#000"/>
<circle cx="462.0" cy="218.0" r="1" fill="#b82a2a"/><circle cx="462.0" cy="240.0" r="1" fill="#b82a2a"/>
<rect x="454.5" y="255.4" width="17.6" height="8.8" rx="4.4" fill="#36ac36"/>
<circle cx="469.0" cy="259.8" r="3.4" fill="none" stroke="#7ad87a" stroke-width="0.9" opacity="0.7"/>
<circle cx="463.0" cy="259.8" r="1.5" fill="#000"/>
<rect x="454.5" y="277.4" width="17.6" height="8.8" rx="4.4" fill="#36ac36"/>
<circle cx="469.0" cy="281.8" r="3.4" fill="none" stroke="#7ad87a" stroke-width="0.9" opacity="0.7"/>
<circle cx="463.0" cy="281.8" r="1.5" fill="#000"/>
<rect x="486.3" y="255.4" width="17.6" height="8.8" rx="4.4" fill="#36ac36"/>
<circle cx="489.5" cy="259.8" r="3.4" fill="none" stroke="#7ad87a" stroke-width="0.9" opacity="0.7"/>
<circle cx="499.5" cy="259.8" r="1.5" fill="#000"/>
<rect x="486.3" y="277.4" width="17.6" height="8.8" rx="4.4" fill="#36ac36"/>
<circle cx="489.5" cy="281.8" r="3.4" fill="none" stroke="#7ad87a" stroke-width="0.9" opacity="0.7"/>
<circle cx="499.5" cy="281.8" r="1.5" fill="#000"/>
<circle cx="463.0" cy="259.8" r="1" fill="#3030c8"/><circle cx="463.0" cy="281.8" r="1" fill="#b82a2a"/>
<circle cx="298.9" cy="153.1" r="3.2" fill="none" stroke="#36ac36" stroke-width="1.7"/>
<circle cx="298.9" cy="153.1" r="1.5" fill="#b0a8e0"/>
<circle cx="348.9" cy="153.1" r="3.2" fill="none" stroke="#36ac36" stroke-width="1.7"/>
<circle cx="348.9" cy="153.1" r="1.5" fill="#b0a8e0"/>
<circle cx="288.4" cy="198.0" r="3.2" fill="none" stroke="#36ac36" stroke-width="1.7"/>
<circle cx="288.4" cy="198.0" r="1.5" fill="#b0a8e0"/>
<circle cx="338.4" cy="198.0" r="3.2" fill="none" stroke="#36ac36" stroke-width="1.7"/>
<circle cx="338.4" cy="198.0" r="1.5" fill="#b0a8e0"/>
<circle cx="284.1" cy="247.8" r="3.2" fill="none" stroke="#36ac36" stroke-width="1.7"/>
<circle cx="284.1" cy="247.8" r="1.5" fill="#b0a8e0"/>
<circle cx="334.1" cy="247.8" r="3.2" fill="none" stroke="#36ac36" stroke-width="1.7"/>
<circle cx="334.1" cy="247.8" r="1.5" fill="#d8a8c0"/>
<circle cx="292.7" cy="279.8" r="3.2" fill="none" stroke="#36ac36" stroke-width="1.7"/>
<circle cx="292.7" cy="279.8" r="1.5" fill="#b0a8e0"/>
<circle cx="342.7" cy="279.8" r="3.2" fill="none" stroke="#36ac36" stroke-width="1.7"/>
<circle cx="342.7" cy="279.8" r="1.5" fill="#b0a8e0"/>
<circle cx="363.5" cy="153.2" r="3.2" fill="none" stroke="#36ac36" stroke-width="1.7"/>
<circle cx="363.5" cy="153.2" r="1.5" fill="#d8a8c0"/>
<circle cx="413.5" cy="153.2" r="3.2" fill="none" stroke="#36ac36" stroke-width="1.7"/>
<circle cx="413.5" cy="153.2" r="1.5" fill="#b0a8e0"/>
<circle cx="365.3" cy="197.8" r="3.2" fill="none" stroke="#36ac36" stroke-width="1.7"/>
<circle cx="365.3" cy="197.8" r="1.5" fill="#d8a8c0"/>
<circle cx="415.3" cy="197.8" r="3.2" fill="none" stroke="#36ac36" stroke-width="1.7"/>
<circle cx="415.3" cy="197.8" r="1.5" fill="#b0a8e0"/>
<circle cx="367.2" cy="237.1" r="3.2" fill="none" stroke="#36ac36" stroke-width="1.7"/>
<circle cx="367.2" cy="237.1" r="1.5" fill="#b0a8e0"/>
<circle cx="417.2" cy="237.1" r="3.2" fill="none" stroke="#36ac36" stroke-width="1.7"/>
<circle cx="417.2" cy="237.1" r="1.5" fill="#d8a8c0"/>
<circle cx="370.4" cy="282.1" r="3.2" fill="none" stroke="#36ac36" stroke-width="1.7"/>
<circle cx="370.4" cy="282.1" r="1.5" fill="#d8a8c0"/>
<circle cx="420.4" cy="282.1" r="3.2" fill="none" stroke="#36ac36" stroke-width="1.7"/>
<circle cx="420.4" cy="282.1" r="1.5" fill="#d8a8c0"/>
<circle cx="206.2" cy="153.2" r="3.2" fill="none" stroke="#36ac36" stroke-width="2.0"/>
<circle cx="206.2" cy="153.2" r="1.5" fill="#4848d0"/>
<circle cx="218.6" cy="153.2" r="3.2" fill="none" stroke="#36ac36" stroke-width="2.0"/>
<circle cx="218.6" cy="153.2" r="1.5" fill="#c04848"/>
<circle cx="208.7" cy="198.3" r="3.2" fill="none" stroke="#36ac36" stroke-width="2.0"/>
<circle cx="208.7" cy="198.3" r="1.5" fill="#4848d0"/>
<circle cx="221.1" cy="198.3" r="3.2" fill="none" stroke="#36ac36" stroke-width="2.0"/>
<circle cx="221.1" cy="198.3" r="1.5" fill="#c04848"/>
<circle cx="210.2" cy="238.5" r="3.2" fill="none" stroke="#36ac36" stroke-width="2.0"/>
<circle cx="210.2" cy="238.5" r="1.5" fill="#4848d0"/>
<circle cx="222.6" cy="238.5" r="3.2" fill="none" stroke="#36ac36" stroke-width="2.0"/>
<circle cx="222.6" cy="238.5" r="1.5" fill="#c04848"/>
<circle cx="211.3" cy="279.4" r="3.2" fill="none" stroke="#36ac36" stroke-width="2.0"/>
<circle cx="211.3" cy="279.4" r="1.5" fill="#4848d0"/>
<circle cx="223.7" cy="279.4" r="3.2" fill="none" stroke="#36ac36" stroke-width="2.0"/>
<circle cx="223.7" cy="279.4" r="1.5" fill="#c04848"/>
<polygon points="424.6,219.4 420.7,223.3 415.1,223.3 411.2,219.4 411.2,213.8 415.1,209.9 420.7,209.9 424.6,213.8" fill="#36ac36"/>
<circle cx="417.9" cy="216.6" r="1.6" fill="#000"/>
<circle cx="417.9" cy="216.6" r="1.0" fill="#b82a2a"/>
<clipPath id="padclip"><rect x="298.8" y="95.7" width="8.4" height="17.4" rx="4.2" fill="#36ac36"/><rect x="311.2" y="95.7" width="8.4" height="17.4" rx="4.2" fill="#36ac36"/><rect x="323.6" y="95.7" width="8.4" height="17.4" rx="4.2" fill="#36ac36"/><rect x="336.0" y="95.7" width="8.4" height="17.4" rx="4.2" fill="#36ac36"/><rect x="348.4" y="95.7" width="8.4" height="17.4" rx="4.2" fill="#36ac36"/><rect x="360.8" y="95.7" width="8.4" height="17.4" rx="4.2" fill="#36ac36"/><rect x="373.2" y="95.7" width="8.4" height="17.4" rx="4.2" fill="#36ac36"/><rect x="385.6" y="95.7" width="8.4" height="17.4" rx="4.2" fill="#36ac36"/><rect x="405.6" y="95.5" width="8.4" height="17.4" rx="4.2" fill="#36ac36"/><rect x="418.0" y="95.5" width="8.4" height="17.4" rx="4.2" fill="#36ac36"/><rect x="430.4" y="95.5" width="8.4" height="17.4" rx="4.2" fill="#36ac36"/><rect x="442.9" y="95.5" width="8.4" height="17.4" rx="4.2" fill="#36ac36"/><rect x="455.3" y="95.5" width="8.4" height="17.4" rx="4.2" fill="#36ac36"/><rect x="467.7" y="95.5" width="8.4" height="17.4" rx="4.2" fill="#36ac36"/><rect x="480.1" y="95.5" width="8.4" height="17.4" rx="4.2" fill="#36ac36"/><rect x="492.5" y="95.5" width="8.4" height="17.4" rx="4.2" fill="#36ac36"/><rect x="343.6" y="307.0" width="8.4" height="17.4" rx="4.2" fill="#36ac36"/><rect x="356.0" y="307.0" width="8.4" height="17.4" rx="4.2" fill="#36ac36"/><rect x="368.4" y="307.0" width="8.4" height="17.4" rx="4.2" fill="#36ac36"/><rect x="380.8" y="307.0" width="8.4" height="17.4" rx="4.2" fill="#36ac36"/><rect x="393.2" y="307.0" width="8.4" height="17.4" rx="4.2" fill="#36ac36"/><rect x="405.6" y="307.0" width="8.4" height="17.4" rx="4.2" fill="#36ac36"/><rect x="431.1" y="306.6" width="8.4" height="17.4" rx="4.2" fill="#36ac36"/><rect x="443.5" y="306.6" width="8.4" height="17.4" rx="4.2" fill="#36ac36"/><rect x="455.9" y="306.6" width="8.4" height="17.4" rx="4.2" fill="#36ac36"/><rect x="468.3" y="306.6" width="8.4" height="17.4" rx="4.2" fill="#36ac36"/><rect x="480.7" y="306.6" width="8.4" height="17.4" rx="4.2" fill="#36ac36"/><rect x="493.1" y="306.6" width="8.4" height="17.4" rx="4.2" fill="#36ac36"/><rect x="453.8" y="134.6" width="17.6" height="8.8" rx="4.4" fill="#36ac36"/><rect x="453.8" y="156.6" width="17.6" height="8.8" rx="4.4" fill="#36ac36"/><rect x="485.6" y="134.6" width="17.6" height="8.8" rx="4.4" fill="#36ac36"/><rect x="485.6" y="156.6" width="17.6" height="8.8" rx="4.4" fill="#36ac36"/><rect x="453.4" y="172.0" width="17.6" height="8.8" rx="4.4" fill="#36ac36"/><rect x="453.4" y="194.0" width="17.6" height="8.8" rx="4.4" fill="#36ac36"/><rect x="485.2" y="172.0" width="17.6" height="8.8" rx="4.4" fill="#36ac36"/><rect x="485.2" y="194.0" width="17.6" height="8.8" rx="4.4" fill="#36ac36"/><rect x="453.5" y="213.6" width="17.6" height="8.8" rx="4.4" fill="#36ac36"/><rect x="453.5" y="235.6" width="17.6" height="8.8" rx="4.4" fill="#36ac36"/><rect x="485.3" y="213.6" width="17.6" height="8.8" rx="4.4" fill="#36ac36"/><rect x="485.3" y="235.6" width="17.6" height="8.8" rx="4.4" fill="#36ac36"/><rect x="454.5" y="255.4" width="17.6" height="8.8" rx="4.4" fill="#36ac36"/><rect x="454.5" y="277.4" width="17.6" height="8.8" rx="4.4" fill="#36ac36"/><rect x="486.3" y="255.4" width="17.6" height="8.8" rx="4.4" fill="#36ac36"/><rect x="486.3" y="277.4" width="17.6" height="8.8" rx="4.4" fill="#36ac36"/></clipPath><g opacity="0.25" clip-path="url(#padclip)">
<polyline points="206.3,153.2 212.8,146.6 292.6,146.6 298.9,153.1" fill="none" stroke="#8080ff" stroke-width="1.2" stroke-linejoin="round" stroke-linecap="round"/>
<polyline points="208.5,198.3 214.7,190.8 281.4,190.8 288.4,198.0" fill="none" stroke="#8080ff" stroke-width="1.2" stroke-linejoin="round" stroke-linecap="round"/>
<polyline points="210.0,238.5 217.5,245.5 276.0,245.5 281.5,239.5 284.1,247.8" fill="none" stroke="#8080ff" stroke-width="1.2" stroke-linejoin="round" stroke-linecap="round"/>
<polyline points="211.5,279.4 217.5,270.9 287.6,270.9 292.7,279.8" fill="none" stroke="#8080ff" stroke-width="1.2" stroke-linejoin="round" stroke-linecap="round"/>
<polyline points="222.8,238.5 226.0,237.0 367.2,237.0" fill="none" stroke="#8080ff" stroke-width="1.2" stroke-linejoin="round" stroke-linecap="round"/>
<polyline points="349.1,153.1 387.0,115.5 405.0,115.5 409.8,104.2" fill="none" stroke="#8080ff" stroke-width="1.2" stroke-linejoin="round" stroke-linecap="round"/>
<polyline points="338.2,198.0 418.0,115.6 444.2,115.6 447.1,104.2" fill="none" stroke="#8080ff" stroke-width="1.2" stroke-linejoin="round" stroke-linecap="round"/>
<polyline points="459.5,104.2 413.7,152.8" fill="none" stroke="#8080ff" stroke-width="1.2" stroke-linejoin="round" stroke-linecap="round"/>
<polyline points="413.7,152.8 418.0,159.7 462.3,159.9" fill="none" stroke="#8080ff" stroke-width="1.2" stroke-linejoin="round" stroke-linecap="round"/>
<polyline points="415.1,197.8 462.0,197.8" fill="none" stroke="#8080ff" stroke-width="1.2" stroke-linejoin="round" stroke-linecap="round"/>
<polyline points="417.9,216.6 342.1,279.8" fill="none" stroke="#8080ff" stroke-width="1.2" stroke-linejoin="round" stroke-linecap="round"/>
<polyline points="462.6,259.6 430.1,259.7 372.6,315.7" fill="none" stroke="#8080ff" stroke-width="1.2" stroke-linejoin="round" stroke-linecap="round"/>
<polyline points="471.9,104.2 474.0,106.5 474.0,141.0" fill="none" stroke="#8080ff" stroke-width="1.2" stroke-linejoin="round" stroke-linecap="round"/>
<polyline points="474.0,259.0 474.0,282.0" fill="none" stroke="#8080ff" stroke-width="1.2" stroke-linejoin="round" stroke-linecap="round"/>
<polyline points="436.8,103.8 436.8,90.6 296.7,90.4 293.0,95.4 293.0,109.8 306.0,121.5 306.0,214.4 329.0,237.5 334.8,247.8" fill="none" stroke="#ffb080" stroke-width="1.2" stroke-linejoin="round" stroke-linecap="round"/>
<polyline points="377.4,104.4 399.3,127.4 399.3,215.0 416.6,237.1" fill="none" stroke="#ffb080" stroke-width="1.2" stroke-linejoin="round" stroke-linecap="round"/>
<polyline points="389.8,104.4 405.5,121.8 405.5,183.5 415.1,197.8" fill="none" stroke="#ffb080" stroke-width="1.2" stroke-linejoin="round" stroke-linecap="round"/>
<polyline points="422.2,104.2 424.0,106.0 424.0,196.3 417.9,216.6" fill="none" stroke="#ffb080" stroke-width="1.2" stroke-linejoin="round" stroke-linecap="round"/>
<polyline points="363.5,153.2 368.3,159.0 368.3,279.5 370.4,282.1" fill="none" stroke="#ffb080" stroke-width="1.2" stroke-linejoin="round" stroke-linecap="round"/>
<polyline points="370.4,282.1 387.0,300.5 387.0,315.6" fill="none" stroke="#ffb080" stroke-width="1.2" stroke-linejoin="round" stroke-linecap="round"/>
<polyline points="384.8,315.7 397.4,315.7" fill="none" stroke="#ffb080" stroke-width="1.2" stroke-linejoin="round" stroke-linecap="round"/>
<polyline points="416.6,237.1 419.5,240.0 462.3,240.0" fill="none" stroke="#ffb080" stroke-width="1.2" stroke-linejoin="round" stroke-linecap="round"/>
<polyline points="420.5,282.1 422.0,283.5 462.5,283.5" fill="none" stroke="#ffb080" stroke-width="1.2" stroke-linejoin="round" stroke-linecap="round"/>
<polyline points="218.5,153.2 218.9,156.0 218.9,233.8 222.8,238.5 225.0,242.0 225.0,275.0 223.5,279.4" fill="none" stroke="#ffb080" stroke-width="1.2" stroke-linejoin="round" stroke-linecap="round"/>
<polyline points="474.0,150.5 474.0,253.0 462.6,259.6" fill="none" stroke="#ffb080" stroke-width="1.2" stroke-linejoin="round" stroke-linecap="round"/>
<polyline points="462.0,139.0 474.0,150.5" fill="none" stroke="#ffb080" stroke-width="1.2" stroke-linejoin="round" stroke-linecap="round"/>
<polyline points="462.0,176.4 474.0,188.0" fill="none" stroke="#ffb080" stroke-width="1.2" stroke-linejoin="round" stroke-linecap="round"/>
<polyline points="462.0,218.0 474.0,229.5" fill="none" stroke="#ffb080" stroke-width="1.2" stroke-linejoin="round" stroke-linecap="round"/>
</g>
<rect x="296.5" y="88.8" width="100.0" height="31.5" fill="none" stroke="#b0b0b0" stroke-width="1.2"/>
<line x1="296.5" y1="110.4" x2="396.5" y2="110.4" stroke="#b0b0b0" stroke-width="1.4" opacity="0.6"/>
<rect x="403.5" y="88.6" width="100.5" height="31.1" fill="none" stroke="#b0b0b0" stroke-width="1.2"/>
<line x1="403.5" y1="98.1" x2="504.0" y2="98.1" stroke="#b0b0b0" stroke-width="1.4" opacity="0.6"/>
<rect x="341.6" y="300.3" width="75.1" height="31.4" fill="none" stroke="#b0b0b0" stroke-width="1.2"/>
<line x1="341.6" y1="309.3" x2="416.7" y2="309.3" stroke="#b0b0b0" stroke-width="1.4" opacity="0.6"/>
<rect x="428.7" y="299.7" width="76.2" height="31.7" fill="none" stroke="#b0b0b0" stroke-width="1.2"/>
<line x1="428.7" y1="309.2" x2="504.9" y2="309.2" stroke="#b0b0b0" stroke-width="1.4" opacity="0.6"/>
<path d="M342.6 104.4H350.6M346.6 100.4V108.4" stroke="#c8c8c8" stroke-width="0.8" opacity="0.8"/>
<path d="M449.0 103.5H457.0M453.0 99.5V107.5" stroke="#c8c8c8" stroke-width="0.8" opacity="0.8"/>
<path d="M375.2 316.0H383.2M379.2 312.0V320.0" stroke="#c8c8c8" stroke-width="0.8" opacity="0.8"/>
<path d="M462.5 315.2H470.5M466.5 311.2V319.2" stroke="#c8c8c8" stroke-width="0.8" opacity="0.8"/>
<text x="386.7" y="85.2" font-size="9.2" fill="#a0a0a0" text-anchor="start" textLength="8.1" lengthAdjust="spacingAndGlyphs">D2</text>
<text x="386.8" y="128.9" font-size="9.2" fill="#a0a0a0" text-anchor="start" textLength="8.1" lengthAdjust="spacingAndGlyphs">D2</text>
<text x="403.0" y="85.3" font-size="9.2" fill="#a0a0a0" text-anchor="start" textLength="7.5" lengthAdjust="spacingAndGlyphs">D1</text>
<text x="403.0" y="128.9" font-size="9.2" fill="#a0a0a0" text-anchor="start" textLength="7.5" lengthAdjust="spacingAndGlyphs">D1</text>
<text x="340.6" y="297.5" font-size="9.2" fill="#a0a0a0" text-anchor="start" textLength="7.5" lengthAdjust="spacingAndGlyphs">A2</text>
<text x="340.6" y="341.6" font-size="9.2" fill="#a0a0a0" text-anchor="start" textLength="7.5" lengthAdjust="spacingAndGlyphs">A2</text>
<text x="427.8" y="297.2" font-size="9.2" fill="#a0a0a0" text-anchor="start" textLength="7.3" lengthAdjust="spacingAndGlyphs">A1</text>
<text x="427.8" y="340.7" font-size="9.2" fill="#a0a0a0" text-anchor="start" textLength="7.3" lengthAdjust="spacingAndGlyphs">A1</text>
<path d="M225.6 145.5A15.3 15.3 0 1 0 225.6 160.9Z" fill="none" stroke="#b0b0b0" stroke-width="1.25"/>
<path d="M215.6 141.4A12.2 12.2 0 1 0 215.6 165.0" fill="none" stroke="#b0b0b0" stroke-width="0.9"/>
<path d="M203.4 153.2A9.0 9.0 0 0 1 212.4 144.2M221.4 153.2A9.0 9.0 0 0 1 212.4 162.2" fill="none" stroke="#b0b0b0" stroke-width="0.9"/>
<path d="M205.8 153.2A6.6 6.6 0 0 1 212.4 146.6M219.0 153.2A6.6 6.6 0 0 1 212.4 159.8" fill="none" stroke="#b0b0b0" stroke-width="0.9"/>
<path d="M209.4 153.2H215.4M212.4 150.2V156.2" stroke="#c8c8c8" stroke-width="0.8" opacity="0.8"/>
<text x="227.9" y="151.7" font-size="9.2" fill="#a0a0a0" text-anchor="start" textLength="19" lengthAdjust="spacingAndGlyphs">LED1</text>
<path d="M228.1 190.6A15.3 15.3 0 1 0 228.1 206.0Z" fill="none" stroke="#b0b0b0" stroke-width="1.25"/>
<path d="M218.1 186.5A12.2 12.2 0 1 0 218.1 210.1" fill="none" stroke="#b0b0b0" stroke-width="0.9"/>
<path d="M205.9 198.3A9.0 9.0 0 0 1 214.9 189.3M223.9 198.3A9.0 9.0 0 0 1 214.9 207.3" fill="none" stroke="#b0b0b0" stroke-width="0.9"/>
<path d="M208.3 198.3A6.6 6.6 0 0 1 214.9 191.7M221.5 198.3A6.6 6.6 0 0 1 214.9 204.9" fill="none" stroke="#b0b0b0" stroke-width="0.9"/>
<path d="M211.9 198.3H217.9M214.9 195.3V201.3" stroke="#c8c8c8" stroke-width="0.8" opacity="0.8"/>
<text x="229.7" y="195.5" font-size="9.2" fill="#a0a0a0" text-anchor="start" textLength="20.1" lengthAdjust="spacingAndGlyphs">LED4</text>
<path d="M229.6 230.8A15.3 15.3 0 1 0 229.6 246.2Z" fill="none" stroke="#b0b0b0" stroke-width="1.25"/>
<path d="M219.6 226.7A12.2 12.2 0 1 0 219.6 250.3" fill="none" stroke="#b0b0b0" stroke-width="0.9"/>
<path d="M207.4 238.5A9.0 9.0 0 0 1 216.4 229.5M225.4 238.5A9.0 9.0 0 0 1 216.4 247.5" fill="none" stroke="#b0b0b0" stroke-width="0.9"/>
<path d="M209.8 238.5A6.6 6.6 0 0 1 216.4 231.9M223.0 238.5A6.6 6.6 0 0 1 216.4 245.1" fill="none" stroke="#b0b0b0" stroke-width="0.9"/>
<path d="M213.4 238.5H219.4M216.4 235.5V241.5" stroke="#c8c8c8" stroke-width="0.8" opacity="0.8"/>
<text x="231.0" y="236.0" font-size="9.2" fill="#a0a0a0" text-anchor="start" textLength="20.3" lengthAdjust="spacingAndGlyphs">LED3</text>
<path d="M230.7 271.7A15.3 15.3 0 1 0 230.7 287.1Z" fill="none" stroke="#b0b0b0" stroke-width="1.25"/>
<path d="M220.7 267.6A12.2 12.2 0 1 0 220.7 291.2" fill="none" stroke="#b0b0b0" stroke-width="0.9"/>
<path d="M208.5 279.4A9.0 9.0 0 0 1 217.5 270.4M226.5 279.4A9.0 9.0 0 0 1 217.5 288.4" fill="none" stroke="#b0b0b0" stroke-width="0.9"/>
<path d="M210.9 279.4A6.6 6.6 0 0 1 217.5 272.8M224.1 279.4A6.6 6.6 0 0 1 217.5 286.0" fill="none" stroke="#b0b0b0" stroke-width="0.9"/>
<path d="M214.5 279.4H220.5M217.5 276.4V282.4" stroke="#c8c8c8" stroke-width="0.8" opacity="0.8"/>
<text x="233.0" y="277.0" font-size="9.2" fill="#a0a0a0" text-anchor="start" textLength="19.8" lengthAdjust="spacingAndGlyphs">LED2</text>
<path d="M465.8 134.8H491.8M465.8 165.2H491.8M463.8 141.0V146.0L465.3 148.0V152.0L463.8 154.0V159.0M493.3 141.0V146.0L491.8 148.0V152.0L493.3 154.0V159.0M468.8 138.5H488.8M468.8 161.5H488.8" fill="none" stroke="#b0b0b0" stroke-width="0.9"/>
<circle cx="478.8" cy="150.0" r="9.2" fill="none" stroke="#b0b0b0" stroke-width="0.9"/>
<polygon points="489.3,154.4 483.2,160.5 474.4,160.5 468.3,154.4 468.3,145.6 474.4,139.5 483.2,139.5 489.3,145.6" fill="none" stroke="#b0b0b0" stroke-width="0.7" opacity="0.5"/>
<path d="M475.8 150.0L478.8 147.0L481.8 150.0L478.8 153.0Z" fill="none" stroke="#d0d0d0" stroke-width="0.9"/>
<path d="M474.3 150.0H483.3M478.8 145.5V154.5" stroke="#c8c8c8" stroke-width="0.8" opacity="0.8"/>
<text x="463.3" y="131.8" font-size="9.2" fill="#a0a0a0" text-anchor="start" textLength="8.8" lengthAdjust="spacingAndGlyphs">S4</text>
<path d="M465.4 172.2H491.4M465.4 202.6H491.4M463.4 178.4V183.4L464.9 185.4V189.4L463.4 191.4V196.4M492.9 178.4V183.4L491.4 185.4V189.4L492.9 191.4V196.4M468.4 175.9H488.4M468.4 198.9H488.4" fill="none" stroke="#b0b0b0" stroke-width="0.9"/>
<circle cx="478.4" cy="187.4" r="9.2" fill="none" stroke="#b0b0b0" stroke-width="0.9"/>
<polygon points="488.9,191.8 482.8,197.9 474.0,197.9 467.9,191.8 467.9,183.0 474.0,176.9 482.8,176.9 488.9,183.0" fill="none" stroke="#b0b0b0" stroke-width="0.7" opacity="0.5"/>
<path d="M475.4 187.4L478.4 184.4L481.4 187.4L478.4 190.4Z" fill="none" stroke="#d0d0d0" stroke-width="0.9"/>
<path d="M473.9 187.4H482.9M478.4 182.9V191.9" stroke="#c8c8c8" stroke-width="0.8" opacity="0.8"/>
<text x="463.0" y="170.9" font-size="9.2" fill="#a0a0a0" text-anchor="start" textLength="8.8" lengthAdjust="spacingAndGlyphs">S2</text>
<path d="M465.5 213.8H491.5M465.5 244.2H491.5M463.5 220.0V225.0L465.0 227.0V231.0L463.5 233.0V238.0M493.0 220.0V225.0L491.5 227.0V231.0L493.0 233.0V238.0M468.5 217.5H488.5M468.5 240.5H488.5" fill="none" stroke="#b0b0b0" stroke-width="0.9"/>
<circle cx="478.5" cy="229.0" r="9.2" fill="none" stroke="#b0b0b0" stroke-width="0.9"/>
<polygon points="489.0,233.4 482.9,239.5 474.1,239.5 468.0,233.4 468.0,224.6 474.1,218.5 482.9,218.5 489.0,224.6" fill="none" stroke="#b0b0b0" stroke-width="0.7" opacity="0.5"/>
<path d="M475.5 229.0L478.5 226.0L481.5 229.0L478.5 232.0Z" fill="none" stroke="#d0d0d0" stroke-width="0.9"/>
<path d="M474.0 229.0H483.0M478.5 224.5V233.5" stroke="#c8c8c8" stroke-width="0.8" opacity="0.8"/>
<text x="463.0" y="211.9" font-size="9.2" fill="#a0a0a0" text-anchor="start" textLength="8.0" lengthAdjust="spacingAndGlyphs">S1</text>
<path d="M466.5 255.6H492.5M466.5 286.0H492.5M464.5 261.8V266.8L466.0 268.8V272.8L464.5 274.8V279.8M494.0 261.8V266.8L492.5 268.8V272.8L494.0 274.8V279.8M469.5 259.3H489.5M469.5 282.3H489.5" fill="none" stroke="#b0b0b0" stroke-width="0.9"/>
<circle cx="479.5" cy="270.8" r="9.2" fill="none" stroke="#b0b0b0" stroke-width="0.9"/>
<polygon points="490.0,275.2 483.9,281.3 475.1,281.3 469.0,275.2 469.0,266.4 475.1,260.3 483.9,260.3 490.0,266.4" fill="none" stroke="#b0b0b0" stroke-width="0.7" opacity="0.5"/>
<path d="M476.5 270.8L479.5 267.8L482.5 270.8L479.5 273.8Z" fill="none" stroke="#d0d0d0" stroke-width="0.9"/>
<path d="M475.0 270.8H484.0M479.5 266.3V275.3" stroke="#c8c8c8" stroke-width="0.8" opacity="0.8"/>
<text x="463.9" y="253.4" font-size="9.2" fill="#a0a0a0" text-anchor="start" textLength="8.8" lengthAdjust="spacingAndGlyphs">S3</text>
<rect x="302.7" y="151.6" width="4.8" height="3" fill="#bcbcbc"/>
<rect x="339.7" y="151.6" width="5.4" height="3" fill="#bcbcbc"/>
<rect x="307.5" y="147.9" width="32.2" height="11.1" rx="2" fill="none" stroke="#b0b0b0" stroke-width="1"/>
<text x="309.4" y="156.3" font-size="9.0" fill="#a0a0a0" text-anchor="start" textLength="25.6" lengthAdjust="spacingAndGlyphs">0 Ohm</text>
<text x="328.2" y="167.6" font-size="9.2" fill="#a0a0a0" text-anchor="start" textLength="9.1" lengthAdjust="spacingAndGlyphs">R1</text>
<rect x="292.2" y="196.5" width="4.8" height="3" fill="#bcbcbc"/>
<rect x="329.2" y="196.5" width="5.4" height="3" fill="#bcbcbc"/>
<rect x="297.0" y="192.8" width="32.2" height="11.1" rx="2" fill="none" stroke="#b0b0b0" stroke-width="1"/>
<text x="298.9" y="201.2" font-size="9.0" fill="#a0a0a0" text-anchor="start" textLength="25.6" lengthAdjust="spacingAndGlyphs">0 Ohm</text>
<text x="317.2" y="212.4" font-size="9.2" fill="#a0a0a0" text-anchor="start" textLength="9.7" lengthAdjust="spacingAndGlyphs">R4</text>
<rect x="287.9" y="246.3" width="4.8" height="3" fill="#bcbcbc"/>
<rect x="324.9" y="246.3" width="5.4" height="3" fill="#bcbcbc"/>
<rect x="292.7" y="242.6" width="32.2" height="11.1" rx="2" fill="none" stroke="#b0b0b0" stroke-width="1"/>
<text x="294.6" y="251.0" font-size="9.0" fill="#a0a0a0" text-anchor="start" textLength="25.6" lengthAdjust="spacingAndGlyphs">0 Ohm</text>
<text x="314.1" y="260.8" font-size="9.2" fill="#a0a0a0" text-anchor="start" textLength="10.3" lengthAdjust="spacingAndGlyphs">R3</text>
<rect x="296.5" y="278.3" width="4.8" height="3" fill="#bcbcbc"/>
<rect x="333.5" y="278.3" width="5.4" height="3" fill="#bcbcbc"/>
<rect x="301.3" y="274.6" width="32.2" height="11.1" rx="2" fill="none" stroke="#b0b0b0" stroke-width="1"/>
<text x="303.2" y="283.0" font-size="9.0" fill="#a0a0a0" text-anchor="start" textLength="25.6" lengthAdjust="spacingAndGlyphs">0 Ohm</text>
<text x="320.8" y="293.0" font-size="9.2" fill="#a0a0a0" text-anchor="start" textLength="10.1" lengthAdjust="spacingAndGlyphs">R2</text>
<rect x="367.3" y="151.7" width="4.8" height="3" fill="#bcbcbc"/>
<rect x="404.3" y="151.7" width="5.4" height="3" fill="#bcbcbc"/>
<rect x="372.1" y="148.0" width="32.2" height="11.1" rx="2" fill="none" stroke="#b0b0b0" stroke-width="1"/>
<text x="377.2" y="156.4" font-size="9.0" fill="#a0a0a0" text-anchor="start" textLength="24.8" lengthAdjust="spacingAndGlyphs">330 Oh</text>
<text x="373.1" y="145.6" font-size="9.2" fill="#a0a0a0" text-anchor="start" textLength="10" lengthAdjust="spacingAndGlyphs">R8</text>
<rect x="369.1" y="196.3" width="4.8" height="3" fill="#bcbcbc"/>
<rect x="406.1" y="196.3" width="5.4" height="3" fill="#bcbcbc"/>
<rect x="373.9" y="192.6" width="32.2" height="11.1" rx="2" fill="none" stroke="#b0b0b0" stroke-width="1"/>
<text x="379.0" y="201.0" font-size="9.0" fill="#a0a0a0" text-anchor="start" textLength="24.8" lengthAdjust="spacingAndGlyphs">330 Oh</text>
<text x="375.3" y="190.7" font-size="9.2" fill="#a0a0a0" text-anchor="start" textLength="10.3" lengthAdjust="spacingAndGlyphs">R6</text>
<rect x="371.0" y="235.6" width="4.8" height="3" fill="#bcbcbc"/>
<rect x="408.0" y="235.6" width="5.4" height="3" fill="#bcbcbc"/>
<rect x="375.8" y="231.9" width="32.2" height="11.1" rx="2" fill="none" stroke="#b0b0b0" stroke-width="1"/>
<text x="380.9" y="240.3" font-size="9.0" fill="#a0a0a0" text-anchor="start" textLength="24.8" lengthAdjust="spacingAndGlyphs">330 Oh</text>
<text x="376.0" y="229.4" font-size="9.2" fill="#a0a0a0" text-anchor="start" textLength="10.7" lengthAdjust="spacingAndGlyphs">R5</text>
<rect x="374.2" y="280.6" width="4.8" height="3" fill="#bcbcbc"/>
<rect x="411.2" y="280.6" width="5.4" height="3" fill="#bcbcbc"/>
<rect x="379.0" y="276.9" width="32.2" height="11.1" rx="2" fill="none" stroke="#b0b0b0" stroke-width="1"/>
<text x="384.1" y="285.3" font-size="9.0" fill="#a0a0a0" text-anchor="start" textLength="24.8" lengthAdjust="spacingAndGlyphs">330 Oh</text>
<text x="380.0" y="274.6" font-size="9.2" fill="#a0a0a0" text-anchor="start" textLength="10.5" lengthAdjust="spacingAndGlyphs">R7</text>
</g>
</svg>
</svg></body></html>
